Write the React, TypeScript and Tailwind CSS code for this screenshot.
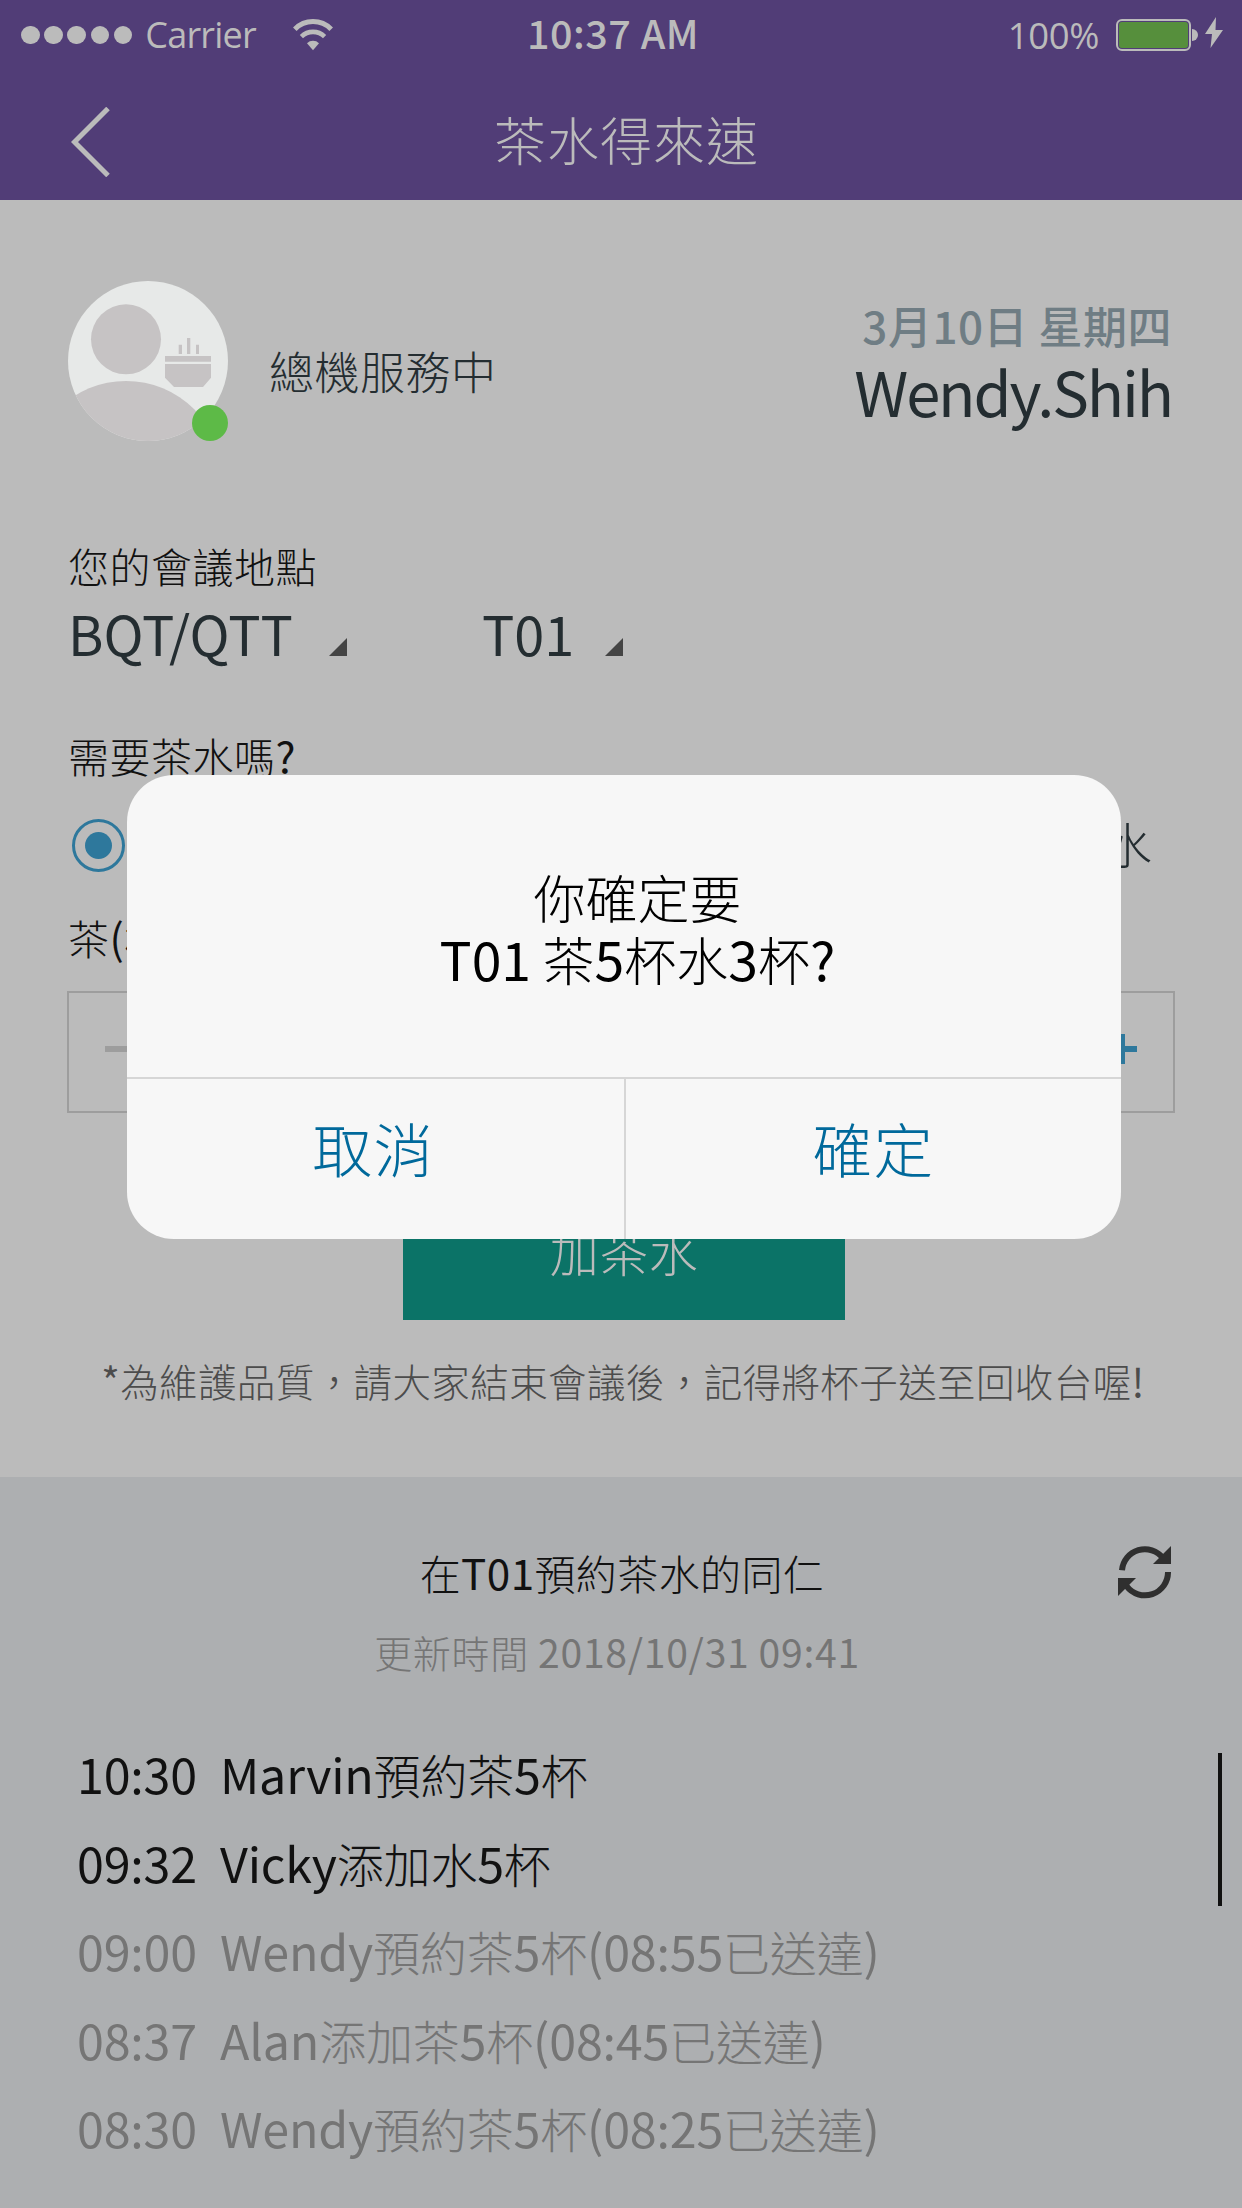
import type { ReactNode } from "react";

function Mixed({ text }: { text: string }) {
  return (
    <span className="whitespace-pre">
      {text.split(/([\x21-\x7e]+)/).map((run, i) =>
        i % 2 === 1 ? (
          <span key={i} className="text-[1.03em] leading-[0] font-normal">
            {run}
          </span>
        ) : (
          run
        ),
      )}
    </span>
  );
}

function Line({ className, children }: { className: string; children: ReactNode }) {
  return <div className={`flex h-[50px] items-center whitespace-nowrap ${className}`}>{children}</div>;
}

function StatusBar() {
  return (
    <div className="flex h-[70px] items-center">
      <div className="flex w-[527px] items-center pl-[21px]">
        <div className="flex gap-[4.6px]">
          {[0, 1, 2, 3, 4].map((i) => (
            <span key={i} className="size-[18.6px] rounded-full bg-[#bbbbbb]" />
          ))}
        </div>
        <span className="ml-[13px] font-['Open_Sans'] text-[36px] leading-[50px] font-normal tracking-[-0.8px]">Carrier</span>
        <svg className="ml-[37px]" width="40" height="32" viewBox="0 0 40 32" fill="none" stroke="#bbbbbb">
          <path d="M1.8 10.2a25.6 25.6 0 0 1 36.4 0" strokeWidth="5" />
          <path d="M8.4 17.6a16.6 16.6 0 0 1 23.2 0" strokeWidth="4.6" />
          <path d="M20 31.2l-6-7a8.600 8.600 0 0 1 12 0z" fill="#bbbbbb" stroke="none" />
        </svg>
      </div>
      <span className="mb-[6px] text-[39.500px] leading-[50px] font-medium tracking-[0.5px]">10:37 AM</span>
      <div className="ml-auto flex items-center pr-[19px]">
        <span className="font-['Open_Sans'] text-[36.500px] leading-[50px] font-normal tracking-[-0.4px]">100%</span>
        <div className="ml-[17px] h-[32px] w-[75px] rounded-[6px] border-2 border-[#bbbbbb] p-px">
          <div className="h-full rounded-[3px] bg-[#568f3c]" />
        </div>
        <div className="ml-px h-[12px] w-[6px] rounded-r-full bg-[#bbbbbb]" />
        <svg className="mb-[5px] ml-[7px]" width="18" height="31" viewBox="0 0 18 31" fill="#bbbbbb">
          <path d="M11 0L0 17h7L5.500 31 18 13h-7.500z" />
        </svg>
      </div>
    </div>
  );
}

function Avatar() {
  return (
    <svg width="160" height="160" viewBox="0 0 160 160">
      <clipPath id="face">
        <circle cx="80" cy="80" r="80" />
      </clipPath>
      <g clipPath="url(#face)">
        <rect width="160" height="160" fill="#e7e9e8" />
        <circle cx="58" cy="58.300" r="35" fill="#c6c3c4" />
        <circle cx="58" cy="196.500" r="96.500" fill="#c6c3c4" />
      </g>
      <path
        d="M97 75h46v5.700H97zM97 83h46v13.700l-8 9.300h-29l-9-9.300zM110.700 63.700h3.300V73h-3.300zM119 57h3.300v16H119zM128 63.700h3V73h-3z"
        fill="#c6c3c4"
      />
      <circle cx="142" cy="142" r="18" fill="#5dba47" />
    </svg>
  );
}

function Select({ value, children }: { value: string; children: ReactNode }) {
  return (
    <div className="flex items-end">
      <span className="text-[54px] leading-[84px] font-normal text-[#242d31]">{value}</span>
      {children}
    </div>
  );
}

function Corner({ className }: { className: string }) {
  return (
    <svg className={className} width="18" height="18" viewBox="0 0 18 18">
      <path d="M18 0v18H0z" fill="#444444" />
    </svg>
  );
}

function Stepper() {
  return (
    <div className="flex h-[122px] w-[520px] items-center justify-between border-2 border-[#9d9d9d] px-[36px] pb-[6px]">
      <span className="h-[6px] w-[30px] bg-[#9d9d9d]" />
      <svg width="30" height="30" viewBox="0 0 30 30">
        <path d="M12 0h6v12h12v6H18v12h-6V18H0v-6h12z" fill="#2e789c" />
      </svg>
    </div>
  );
}

const orders = [
  { time: "10:30", text: "Marvin預約茶5杯", done: false },
  { time: "09:32", text: "Vicky添加水5杯", done: false },
  { time: "09:00", text: "Wendy預約茶5杯(08:55已送達)", done: true },
  { time: "08:37", text: "Alan添加茶5杯(08:45已送達)", done: true },
  { time: "08:30", text: "Wendy預約茶5杯(08:25已送達)", done: true },
];

function Dialog() {
  return (
    <div className="absolute top-[775px] left-[127px] flex h-[464px] w-[994px] flex-col overflow-hidden rounded-[47px] bg-[#f7f7f7] text-black">
      <div className="flex h-[302px] flex-col items-center pt-[91px] pl-[27px] text-[52px] leading-[62px]">
        <div><Mixed text="你確定要" /></div>
        <div><Mixed text="T01 茶5杯水3杯?" /></div>
      </div>
      <div className="grid flex-1 grid-cols-[499px_1fr] border-t-2 border-[#d6d6d6] text-[59.500px] leading-[100px] tracking-[1.5px] text-[#00699b]">
        <button className="border-r-2 border-[#d6d6d6] pr-[4px] pb-[24px]">取消</button>
        <button className="pb-[24px]">確定</button>
      </div>
    </div>
  );
}

export default function App() {
  return (
    <div className="relative h-[2208px] w-[1242px] overflow-hidden bg-[#bbbbbb] font-['Noto_Sans_CJK_TC',sans-serif] font-light text-[#111111]">
      <header className="h-[200px] bg-[#513d77] text-[#bbbbbb]">
        <StatusBar />
        <div className="relative flex h-[130px] items-center justify-center pt-[14px] pl-[11px]">
          <svg className="absolute top-[37px] left-[71px]" width="40" height="70" viewBox="0 0 40 70" fill="none" stroke="#bbbbbb" strokeWidth="5">
            <path d="M37 1.500L3.500 35 37 68.500" />
          </svg>
          <h1 className="-mt-[6px] text-[52px] leading-[60px] font-light tracking-[1px]">茶水得來速</h1>
        </div>
      </header>

      <main className="h-[1277px] pt-[81px]">
        <div className="flex h-[160px] pr-[70px] pl-[68px]">
          <Avatar />
          <div className="mt-[59px] ml-[41px] text-[45px] leading-[62px] tracking-[0.5px] text-[#242d31]">總機服務中</div>
          <div className="mt-[14px] ml-auto flex flex-col items-end">
            <span className="text-[44px] leading-[60px] font-medium tracking-[0.5px] text-[#6f7d84]">3月10日 星期四</span>
            <span className="-mt-[2px] text-[61.500px] leading-[76px] font-normal tracking-[-2.1px] text-[#242d31]">Wendy.Shih</span>
          </div>
        </div>

        <Line className="mt-[100px] pl-[68px] text-[41px] tracking-[0.5px]">您的會議地點</Line>
        <div className="flex h-[84px] pl-[68px]">
          <Select value="BQT/QTT"><Corner className="mb-[19px] ml-[36px]" /></Select>
          <div className="ml-[135px] flex">
            <Select value="T01"><Corner className="mb-[19px] ml-[31px]" /></Select>
          </div>
        </div>

        <Line className="mt-[56px] pl-[68px] text-[41px] tracking-[0.5px]"><Mixed text="需要茶水嗎?" /></Line>
        <div className="mt-[34px] flex h-[60px] items-center justify-between pr-[90px] pl-[72px]">
          <span className="flex size-[53px] items-center justify-center rounded-full border-3 border-[#2e789c]">
            <span className="size-[27px] rounded-full bg-[#2e789c]" />
          </span>
          <span className="mb-[4px] text-[49px] leading-[56px] text-[#242d31]">水</span>
        </div>

        <Line className="mt-[38px] pl-[68px] text-[41px] tracking-[0.5px]"><Mixed text="茶(杯)" /></Line>
        <div className="mt-[28px] flex justify-between pr-[67px] pl-[67px]">
          <Stepper />
          <Stepper />
        </div>

        <button className="mt-[69px] ml-[403px] block h-[138px] w-[442px] bg-[#0b7367] text-[49px] leading-[134px] tracking-[0.5px] text-[#bbbbbb]">加茶水</button>
        <Line className="mt-[36px] justify-center pl-[4px] text-[38.500px] tracking-[0.4px] text-[#4c4c4c]"><Mixed text="*為維護品質，請大家結束會議後，記得將杯子送至回收台喔!" /></Line>
      </main>

      <section className="relative h-[731px] bg-[#adafb1] pt-[71px]">
        <svg className="absolute top-[69px] left-[1118px]" width="53" height="53" viewBox="0 0 53 53" fill="none" stroke="#2f2f2f" strokeWidth="6">
          <path d="M4 24.200a23 23 0 0 1 41-12.200" />
          <path d="M50 26a23 23 0 0 1-41.500 14" />
          <path d="M53 0v18H35zM0 32h18L0 50z" fill="#2f2f2f" stroke="none" />
        </svg>
        <Line className="justify-center pl-[2px] text-[41px] tracking-[0.4px]"><Mixed text="在T01預約茶水的同仁" /></Line>
        <Line className="mt-[28px] justify-center pr-[8px] text-[38px] tracking-[0.7px] text-[#757575]"><Mixed text="更新時間 2018/10/31 09:41" /></Line>
        <ul className="mt-[54px] text-[47px] leading-[88.500px] tracking-[-0.2px]">
          {orders.map((order) => (
            <li key={order.time} className={order.done ? "flex pl-[77px] text-[#757575]" : "flex pl-[77px]"}>
              <span className="w-[143px]"><Mixed text={order.time} /></span>
              <Mixed text={order.text} />
            </li>
          ))}
        </ul>
        <div className="absolute top-[276px] left-[1218px] h-[153px] w-[4px] bg-[#111111]" />
      </section>

      <Dialog />
    </div>
  );
}
